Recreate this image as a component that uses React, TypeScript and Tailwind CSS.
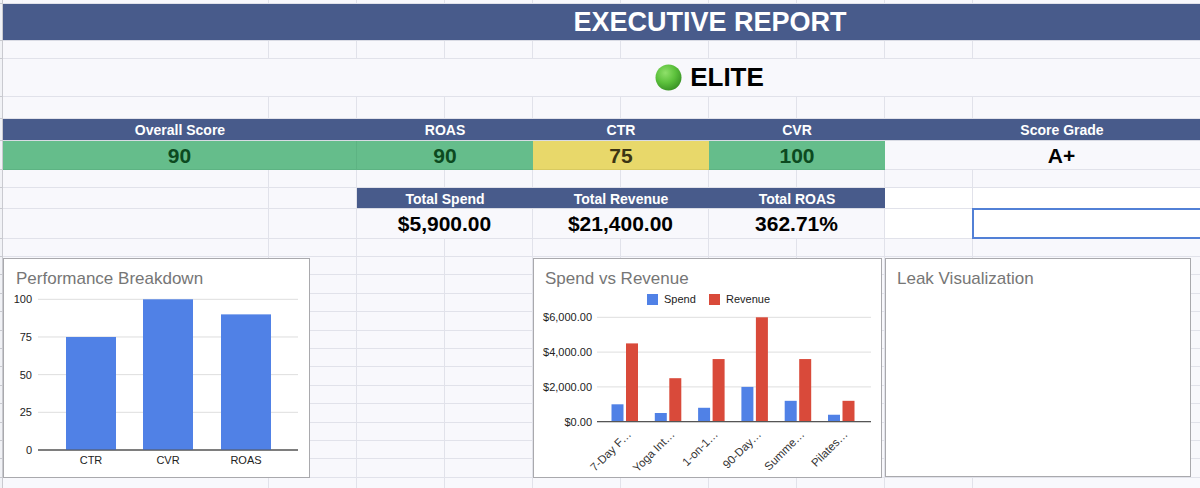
import React from "react";

const G = "border-r border-b border-[#e1e2ea]";

function Sliver() {
  return <div className="w-[3px] shrink-0 border-r border-b border-[#c9cad0] bg-[#f1f2f6]" />;
}

function PlainCells({ white = false }: { white?: boolean }) {
  const bg = white ? "bg-white" : "";
  return (
    <>
      <div className={`w-[266px] shrink-0 ${G} ${bg}`} />
      {Array.from({ length: 8 }).map((_, i) => (
        <div key={i} className={`w-[88px] shrink-0 ${G} ${bg}`} />
      ))}
      <div className={`w-[266px] shrink-0 ${G} ${bg}`} />
    </>
  );
}

function PlainRow({ h }: { h: string }) {
  return (
    <div className={`flex shrink-0 ${h}`}>
      <Sliver />
      <PlainCells />
    </div>
  );
}

const HDR = "flex shrink-0 items-center justify-center pt-[2px] bg-[#485b8b] text-white font-bold text-[14px] border-b border-[#d9dbe4]";

function GreenCircle() {
  return (
    <svg width="27" height="27" viewBox="0 0 27 27">
      <defs>
        <radialGradient id="gc" cx="0.38" cy="0.32" r="0.7">
          <stop offset="0" stopColor="#8fe06a" />
          <stop offset="0.55" stopColor="#5cc13c" />
          <stop offset="1" stopColor="#3a9426" />
        </radialGradient>
      </defs>
      <circle cx="13.5" cy="13.5" r="13" fill="url(#gc)" />
    </svg>
  );
}

function PerformanceChart() {
  const bars = [
    { label: "CTR", v: 75, x: 66 },
    { label: "CVR", v: 100, x: 143 },
    { label: "ROAS", v: 90, x: 221 },
  ];
  const y0 = 450;
  const k = (450 - 299.3) / 100;
  const ticks = [0, 25, 50, 75, 100];
  return (
    <div className="absolute left-[3px] top-[258px] w-[307px] h-[220px] border border-[#a9a9ad] bg-white">
      <div className="absolute left-[12px] top-[9px] text-[17px] leading-[22px] text-[#767676]">Performance Breakdown</div>
      <svg className="absolute left-[-1px] top-[-1px]" width="307" height="220" viewBox="3 258 307 220">
        {ticks.map((t) => (
          <g key={t}>
            <line x1="38" x2="298" y1={y0 - t * k} y2={y0 - t * k} stroke={t === 0 ? "#555" : "#dedede"} strokeWidth={t === 0 ? 1.2 : 1} />
            <text x="32" y={y0 - t * k + 4} textAnchor="end" fontSize="11" fill="#222">{t}</text>
          </g>
        ))}
        {bars.map((b) => (
          <g key={b.label}>
            <rect x={b.x} y={y0 - b.v * k} width="50" height={b.v * k} fill="#5081e6" />
            <text x={b.x + 25} y="464" textAnchor="middle" fontSize="11" fill="#222">{b.label}</text>
          </g>
        ))}
        <line x1="38" x2="298" y1={y0} y2={y0} stroke="#555" strokeWidth="1.2" />
      </svg>
    </div>
  );
}

function SpendChart() {
  const data = [
    { l: "7-Day F…", s: 1000, r: 4500 },
    { l: "Yoga Int…", s: 500, r: 2500 },
    { l: "1-on-1…", s: 800, r: 3600 },
    { l: "90-Day…", s: 2000, r: 6000 },
    { l: "Summe…", s: 1200, r: 3600 },
    { l: "Pilates…", s: 400, r: 1200 },
  ];
  const y0 = 421.7;
  const k = (421.7 - 317.3) / 6000;
  const ticks = [
    { v: 0, t: "$0.00" },
    { v: 2000, t: "$2,000.00" },
    { v: 4000, t: "$4,000.00" },
    { v: 6000, t: "$6,000.00" },
  ];
  return (
    <div className="absolute left-[533px] top-[258px] w-[349px] h-[220px] border border-[#a9a9ad] bg-white">
      <div className="absolute left-[11px] top-[9px] text-[17px] leading-[22px] text-[#767676]">Spend vs Revenue</div>
      <svg className="absolute left-[-1px] top-[-1px]" width="349" height="220" viewBox="533 258 349 220">
        <rect x="647" y="294" width="11" height="11" fill="#5081e6" />
        <text x="664" y="303" fontSize="11" fill="#222">Spend</text>
        <rect x="709" y="294" width="11" height="11" fill="#d94a3a" />
        <text x="726" y="303" fontSize="11" fill="#222">Revenue</text>
        {ticks.map((t) => (
          <g key={t.v}>
            <line x1="597" x2="871" y1={y0 - t.v * k} y2={y0 - t.v * k} stroke="#dedede" />
            <text x="592" y={y0 - t.v * k + 4} textAnchor="end" fontSize="11" fill="#222">{t.t}</text>
          </g>
        ))}
        {data.map((d, i) => {
          const c = 625 + 43.3 * i;
          return (
            <g key={d.l}>
              <rect x={c - 13.5} y={y0 - d.s * k} width="12" height={d.s * k} fill="#5081e6" />
              <rect x={c + 1} y={y0 - d.r * k} width="12" height={d.r * k} fill="#d94a3a" />
              <text x={c + 7} y={435} textAnchor="end" fontSize="11.5" fill="#333" transform={`rotate(-45 ${c + 7} 435)`}>{d.l}</text>
            </g>
          );
        })}
        <line x1="597" x2="871" y1={y0} y2={y0} stroke="#555" strokeWidth="1.2" />
      </svg>
    </div>
  );
}

function LeakChart() {
  return (
    <div className="absolute left-[885px] top-[258px] w-[306px] h-[219px] border border-[#a9a9ad] bg-white">
      <div className="absolute left-[11px] top-[9px] text-[17px] leading-[22px] text-[#767676]">Leak Visualization</div>
    </div>
  );
}

export default function App() {
  return (
    <div className="relative w-[1200px] h-[488px] overflow-hidden bg-[#f8f8fc] font-['Liberation_Sans',Arial,sans-serif]">
      <div className="flex flex-col w-[1420px]">
        <PlainRow h="h-[4px]" />
        {/* Title */}
        <div className="flex shrink-0 h-[37px]">
          <Sliver />
          <div className="w-[1414px] shrink-0 flex items-center justify-center pt-[1px] bg-[#485b8b] border-b border-[#d9dbe4] text-white font-bold text-[27px]">
            EXECUTIVE REPORT
          </div>
        </div>
        <PlainRow h="h-[18px]" />
        {/* ELITE */}
        <div className="flex shrink-0 h-[38px]">
          <Sliver />
          <div className={`w-[1414px] shrink-0 flex items-center justify-center gap-[8px] ${G}`}>
            <GreenCircle />
            <span className="font-bold text-[26px] text-black">ELITE</span>
          </div>
        </div>
        <PlainRow h="h-[22px]" />
        {/* Score headers */}
        <div className="flex shrink-0 h-[22px]">
          <Sliver />
          <div className={`w-[354px] ${HDR}`}>Overall Score</div>
          <div className={`w-[176px] ${HDR}`}>ROAS</div>
          <div className={`w-[176px] ${HDR}`}>CTR</div>
          <div className={`w-[176px] ${HDR}`}>CVR</div>
          <div className={`w-[354px] ${HDR}`}>Score Grade</div>
        </div>
        {/* Score values */}
        <div className="flex shrink-0 h-[29px] font-bold text-[21px]">
          <Sliver />
          <div className="w-[354px] shrink-0 flex items-center justify-center pt-[1px] bg-[#65bd8b] text-[#0c4a1f] border-r border-b border-[#5db383]">90</div>
          <div className="w-[176px] shrink-0 flex items-center justify-center pt-[1px] bg-[#65bd8b] text-[#0c4a1f] border-b border-[#5db383]">90</div>
          <div className="w-[176px] shrink-0 flex items-center justify-center pt-[1px] bg-[#e8d86a] text-[#3b3413] border-b border-[#d9ca60]">75</div>
          <div className="w-[176px] shrink-0 flex items-center justify-center pt-[1px] bg-[#65bd8b] text-[#0c4a1f] border-b border-[#5db383]">100</div>
          <div className={`w-[354px] shrink-0 flex items-center justify-center pt-[1px] text-black ${G}`}>A+</div>
        </div>
        <PlainRow h="h-[18px]" />
        {/* Totals header */}
        <div className="flex shrink-0 h-[21px]">
          <Sliver />
          <div className={`w-[266px] shrink-0 ${G}`} />
          <div className={`w-[88px] shrink-0 ${G}`} />
          <div className={`w-[176px] ${HDR}`}>Total Spend</div>
          <div className={`w-[176px] ${HDR}`}>Total Revenue</div>
          <div className={`w-[176px] ${HDR}`}>Total ROAS</div>
          <div className={`w-[88px] shrink-0 bg-white ${G}`} />
          <div className={`w-[266px] shrink-0 bg-white ${G}`} />
        </div>
        {/* Totals values */}
        <div className="flex shrink-0 h-[30px] font-bold text-[21px] text-black">
          <Sliver />
          <div className={`w-[266px] shrink-0 ${G}`} />
          <div className={`w-[88px] shrink-0 ${G}`} />
          <div className={`w-[176px] shrink-0 flex items-center justify-center pt-[1px] ${G}`}>$5,900.00</div>
          <div className={`w-[176px] shrink-0 flex items-center justify-center pt-[1px] ${G}`}>$21,400.00</div>
          <div className={`w-[176px] shrink-0 flex items-center justify-center pt-[1px] ${G}`}>362.71%</div>
          <div className={`w-[88px] shrink-0 bg-white ${G}`} />
          <div className={`w-[266px] shrink-0 bg-white ${G}`} />
        </div>
        <PlainRow h="h-[18px]" />
        {Array.from({ length: 13 }).map((_, i) => (
          <PlainRow key={i} h="h-[18.4px]" />
        ))}
      </div>

      {/* selection box */}
      <div className="absolute left-[972px] top-[208px] w-[240px] h-[31px] border-2 border-[#5280d6]" />

      <PerformanceChart />
      <SpendChart />
      <LeakChart />
    </div>
  );
}
